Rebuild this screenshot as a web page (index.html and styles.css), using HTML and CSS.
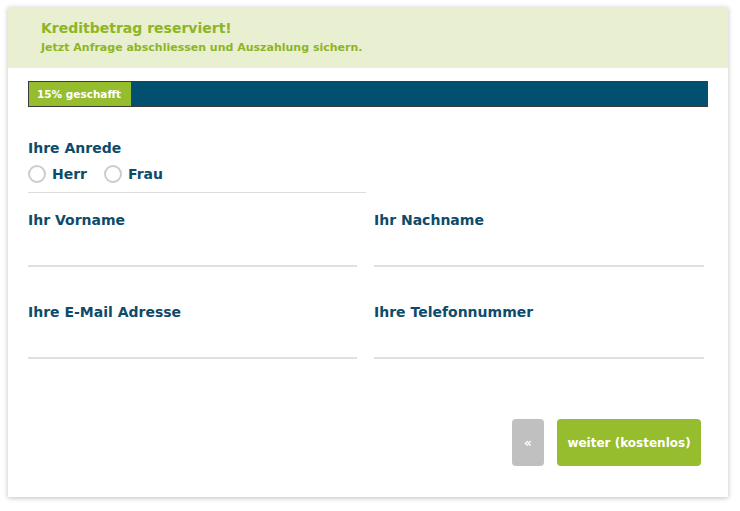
FILE: index.html
```html
<!DOCTYPE html>
<html lang="de">
<head>
  <meta charset="UTF-8" />
  <meta name="viewport" content="width=device-width, initial-scale=1.0" />
  <title>Kreditanfrage</title>
  <link rel="stylesheet" href="styles.css">
</head>
<body>
<main class="card">
  <!-- Hinweis -->
  <header class="notice">
    <h1>Kreditbetrag reserviert!</h1>
    <p>Jetzt Anfrage abschliessen und Auszahlung sichern.</p>
  </header>

  <div class="card-body">
    <!-- Fortschritt -->
    <div class="progress">
      <div class="progress-fill" style="width: 15%">15% geschafft</div>
    </div>

    <form class="form" onsubmit="event.preventDefault();">
      <div class="salutation">
        <span class="field-label">Ihre Anrede</span>
        <div class="radios">
          <label class="radio"><input type="radio" name="anrede" value="herr" /><span class="dot"></span>Herr</label>
          <label class="radio"><input type="radio" name="anrede" value="frau" /><span class="dot"></span>Frau</label>
        </div>
      </div>

      <div class="grid">
        <div class="field">
          <label class="field-label" for="vorname">Ihr Vorname</label>
          <input id="vorname" />
        </div>
        <div class="field">
          <label class="field-label" for="nachname">Ihr Nachname</label>
          <input id="nachname" />
        </div>
        <div class="field">
          <label class="field-label" for="email">Ihre E-Mail Adresse</label>
          <input id="email" type="email" />
        </div>
        <div class="field">
          <label class="field-label" for="telefon">Ihre Telefonnummer</label>
          <input id="telefon" type="tel" />
        </div>
      </div>

      <div class="actions">
        <button type="button" class="btn-back">&laquo;</button>
        <button type="submit" class="btn-next">weiter (kostenlos)</button>
      </div>
    </form>
  </div>
</main>
</body>
</html>
```

FILE: styles.css
```css
body {
  margin: 0;
  padding: 7px 12px 14px 8px;
  background-color: #ffffff;
  font-family: "DejaVu Sans", Arial, sans-serif;
  font-weight: bold;
}

.card {
  width: 720px;
  background-color: #ffffff;
  box-shadow: 0 1px 5px rgba(0, 0, 0, 0.25);
}

.notice {
  background-color: #e9efd1;
  padding: 10px 33px 12px;
  color: #8db526;
}

.notice h1 {
  margin: 0;
  font-size: 14px;
  line-height: 22px;
}

.notice p {
  margin: 1px 0 0;
  font-size: 11px;
  line-height: 16px;
}

.card-body {
  padding: 13px 20px 31px;
}

.progress {
  height: 24px;
  border: 1px solid #3c3c3c;
  background-color: #02506f;
}

.progress-fill {
  height: 100%;
  background-color: #96bd2e;
  color: #ffffff;
  font-size: 10.5px;
  line-height: 24px;
  padding-left: 8px;
  box-sizing: border-box;
}

.form {
  margin-top: 31px;
}

.field-label {
  display: block;
  color: #0e4b6a;
  font-size: 14px;
  line-height: 20px;
}

.salutation {
  width: 338px;
  border-bottom: 1px solid #dcdcdc;
  padding-bottom: 8px;
}

.radios {
  display: flex;
  gap: 17px;
  margin-top: 6px;
}

.radio {
  display: flex;
  align-items: center;
  gap: 6px;
  color: #0e4b6a;
  font-size: 14px;
  line-height: 20px;
}

.radio input {
  display: none;
}

.dot {
  width: 14px;
  height: 14px;
  border: 2px solid #cccccc;
  border-radius: 50%;
}

.grid {
  display: grid;
  grid-template-columns: 329px 330px;
  column-gap: 17px;
  row-gap: 35px;
  margin-top: 17px;
}

.field input {
  display: block;
  width: 100%;
  height: 37px;
  box-sizing: border-box;
  border: none;
  border-bottom: 2px solid #e0e0e0;
  outline: none;
  font-size: 14px;
}

.actions {
  display: flex;
  justify-content: flex-end;
  gap: 13px;
  margin-top: 60px;
  padding-right: 7px;
}

.actions button {
  height: 47px;
  border: none;
  border-radius: 4px;
  color: #ffffff;
  font-family: inherit;
  font-weight: bold;
  cursor: pointer;
}

.btn-back {
  width: 32px;
  background-color: #c0c0c0;
  font-size: 12px;
}

.btn-next {
  width: 144px;
  background-color: #96bd2e;
  font-size: 12px;
}
```
